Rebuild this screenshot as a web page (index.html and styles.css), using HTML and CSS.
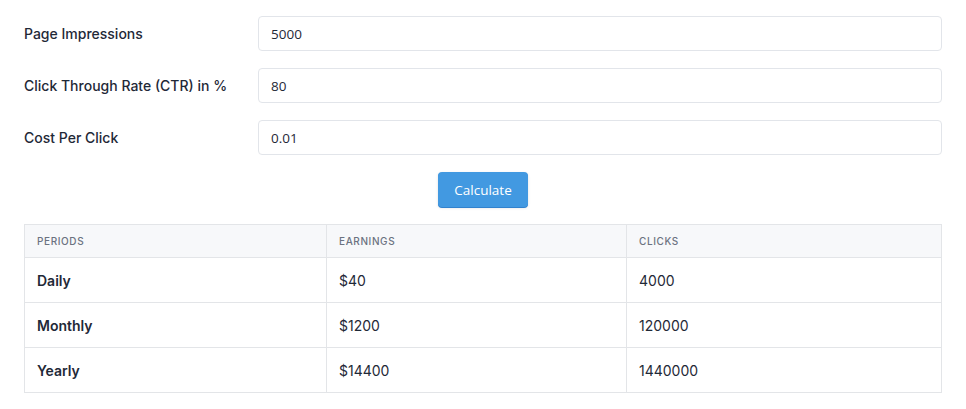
FILE: index.html
```html
<!DOCTYPE html>
<html lang="en">

<head>
    <meta charset="UTF-8">
    <meta name="viewport" content="width=device-width, initial-scale=1.0">
    <title>CPC Calculator</title>
    <link rel="stylesheet" href="styles.css">
</head>

<body>
    <div class="card">
        <form class="calc-form">
            <label class="field-label" for="impressions">Page Impressions</label>
            <input class="field-input" id="impressions" type="text" value="5000">

            <label class="field-label" for="ctr">Click Through Rate (CTR) in %</label>
            <input class="field-input" id="ctr" type="text" value="80">

            <label class="field-label" for="cpc">Cost Per Click</label>
            <input class="field-input" id="cpc" type="text" value="0.01">

            <div class="actions">
                <button class="btn" type="button">Calculate</button>
            </div>
        </form>

        <table class="results">
            <thead>
                <tr>
                    <th class="col-period">Periods</th>
                    <th class="col-earn">Earnings</th>
                    <th>Clicks</th>
                </tr>
            </thead>
            <tbody>
                <tr>
                    <td class="period">Daily</td>
                    <td>$40</td>
                    <td>4000</td>
                </tr>
                <tr>
                    <td class="period">Monthly</td>
                    <td>$1200</td>
                    <td>120000</td>
                </tr>
                <tr>
                    <td class="period">Yearly</td>
                    <td>$14400</td>
                    <td>1440000</td>
                </tr>
            </tbody>
        </table>
    </div>
</body>

</html>
```

FILE: styles.css
```css
body {
    margin: 0;
    background: #ffffff;
    color: #1f2937;
    font-family: Inter, "Noto Sans", sans-serif;
}

.card {
    padding: 16px 24px 16px 24px;
}

.calc-form {
    display: grid;
    grid-template-columns: 234px 1fr;
    row-gap: 17px;
    align-items: center;
}

.field-label {
    font-size: 14px;
    font-weight: 500;
    color: #1f2937;
}

.field-input {
    box-sizing: border-box;
    height: 35px;
    padding: 0 12px;
    border: 1px solid #e2e5ea;
    border-radius: 4px;
    font-family: "Open Sans", "Noto Sans", sans-serif;
    font-size: 13.5px;
    color: #1f2937;
    outline: none;
}

.actions {
    grid-column: 1 / -1;
    display: flex;
    justify-content: center;
}

.btn {
    width: 90px;
    height: 35px;
    border: none;
    border-radius: 4px;
    background: #4299e1;
    box-shadow: 0 1px 0 #3182ce, 0 1px 3px rgba(0, 0, 0, 0.12);
    color: #ffffff;
    font-family: "Open Sans", "Noto Sans", sans-serif;
    font-size: 13.5px;
    cursor: pointer;
}

.results {
    width: 100%;
    margin-top: 17px;
    border-collapse: collapse;
    border: 1px solid #e3e5e8;
    font-size: 14px;
}

.results th {
    height: 32px;
    padding: 0 12px;
    background: #f7f8fa;
    border: 1px solid #e3e5e8;
    text-align: left;
    font-size: 10px;
    font-weight: 500;
    letter-spacing: 0.6px;
    text-transform: uppercase;
    color: #6b7280;
}

.col-period {
    width: 277px;
}

.col-earn {
    width: 275px;
}

.results td {
    height: 43px;
    padding: 1px 12px 0 12px;
    border: 1px solid #e3e5e8;
    color: #1f2937;
}

.results .period {
    font-weight: 600;
}
```
